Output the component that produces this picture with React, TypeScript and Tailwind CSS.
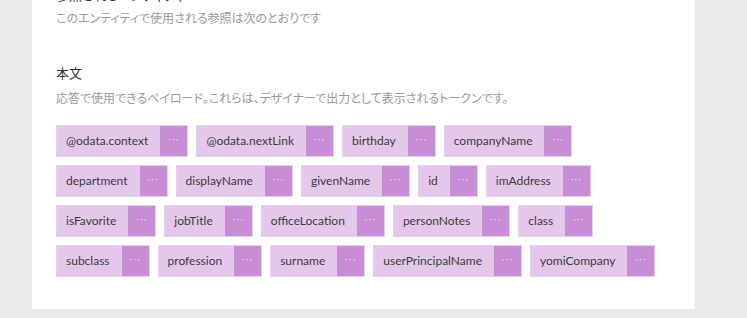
import React from 'react';

const tokens = [
    '@odata.context', '@odata.nextLink', 'birthday', 'companyName',
    'department', 'displayName', 'givenName', 'id', 'imAddress',
    'isFavorite', 'jobTitle', 'officeLocation', 'personNotes', 'class',
    'subclass', 'profession', 'surname', 'userPrincipalName', 'yomiCompany',
];

const Token: React.FC<{ name: string }> = ({ name }) => (
    <div className="flex h-8 items-stretch border border-[#e6cfec] bg-[#e4c8eb]">
        <span className="flex items-center pl-[9px] pr-3 font-['Lato',sans-serif] text-[12px] text-[#3b3b3b]">{name}</span>
        <span className="flex w-[27px] items-center justify-center bg-[#c88bd5] pb-[3px] text-[11px] tracking-[1px] text-[#ecdcf0]">···</span>
    </div>
);

const App: React.FC = () => {
    return (
        <div className="h-[318px] w-[747px] overflow-hidden bg-[#eaeaea] font-['Segoe_UI','Open_Sans','Noto_Sans_CJK_JP',sans-serif]">
            <div className="ml-8 w-[663px] bg-white px-6 pb-8 [font-feature-settings:'palt']">
                <h2 className="-mt-[13px] text-[13px] leading-[17px] text-[#333]">参照されるエンティティ</h2>
                <p className="mt-[7px] text-[12px] leading-4 text-[#9a9a9a]">このエンティティで使用される参照は次のとおりです</p>
                <h2 className="mt-[38px] text-[13px] leading-[17px] text-[#333]">本文</h2>
                <p className="mt-[9px] text-[12px] leading-4 text-[#9a9a9a]">応答で使用できるペイロード。これらは、デザイナーで出力として表示されるトークンです。</p>
                <div className="mt-[18px] flex flex-wrap gap-2">
                    {tokens.map((t) => (
                        <Token key={t} name={t} />
                    ))}
                </div>
            </div>
        </div>
    );
};

export default App;
